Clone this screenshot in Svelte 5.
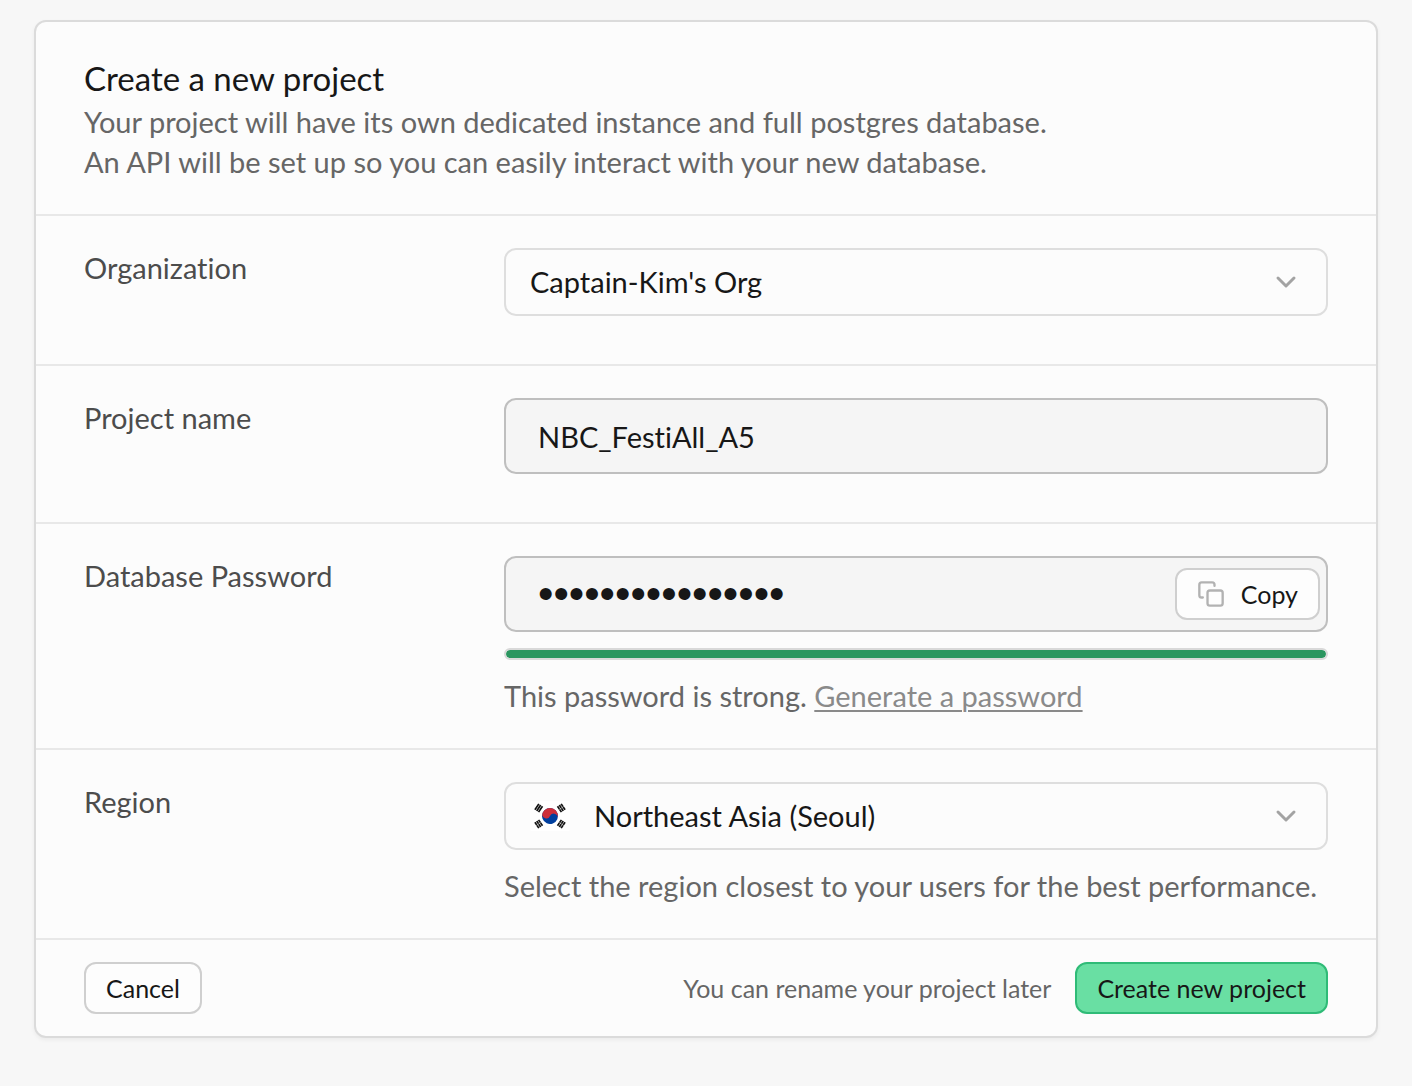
<script lang="ts">
  let organization = $state("Captain-Kim's Org");
  let projectName = $state('NBC_FestiAll_A5');
  let password = $state('aB3dE6gH9jK2mN5p');
  let region = $state('Northeast Asia (Seoul)');
  let strength = $state(100);

  const chars = 'ABCDEFGHJKLMNPQRSTUVWXYZabcdefghjkmnpqrstuvwxyz23456789';

  function generatePassword(e: MouseEvent) {
    e.preventDefault();
    const bytes = crypto.getRandomValues(new Uint8Array(16));
    password = Array.from(bytes, (b) => chars[b % chars.length]).join('');
    strength = 100;
  }

  function copyPassword() {
    navigator.clipboard?.writeText(password);
  }
</script>

{#snippet chevron()}
  <svg class="chevron" viewBox="0 0 24 24" aria-hidden="true">
    <path d="M4 8l8 8 8-8" />
  </svg>
{/snippet}

{#snippet trigram(x: number, y: number, angle: number, broken: boolean)}
  <g transform="translate({x} {y}) rotate({angle})">
    <path d="M-3.5 -2.2h7M-3.5 0h7M-3.5 2.2h7" stroke="#111" stroke-width="1.7" />
    {#if broken}
      <path d="M0 -3v6" stroke="#fff" stroke-width="0.4" />
    {/if}
  </g>
{/snippet}

<main>
  <form class="panel" onsubmit={(e) => e.preventDefault()}>
    <header>
      <h1>Create a new project</h1>
      <p>
        Your project will have its own dedicated instance and full postgres database.<br />
        An API will be set up so you can easily interact with your new database.
      </p>
    </header>

    <div class="row spaced">
      <label for="organization">Organization</label>
      <div class="field">
        <div class="select">
          <select id="organization" bind:value={organization}>
            <option>Captain-Kim's Org</option>
          </select>
          {@render chevron()}
        </div>
      </div>
    </div>

    <div class="row spaced">
      <label for="project-name">Project name</label>
      <div class="field">
        <input id="project-name" type="text" bind:value={projectName} />
      </div>
    </div>

    <div class="row">
      <label for="password">Database Password</label>
      <div class="field">
        <div class="password">
          <input id="password" type="password" autocomplete="off" bind:value={password} />
          <button type="button" class="btn copy" onclick={copyPassword}>
            <svg viewBox="0 0 24 24" aria-hidden="true">
              <rect x="9" y="9" width="13" height="13" rx="2" />
              <path d="M5 15H4a2 2 0 0 1-2-2V4a2 2 0 0 1 2-2h9a2 2 0 0 1 2 2v1" />
            </svg>
            Copy
          </button>
        </div>
        <div class="strength">
          <div class="strength-bar" style="width: {strength}%"></div>
        </div>
        <p>
          This password is strong.
          <a href="#generate" onclick={generatePassword}>Generate a password</a>
        </p>
      </div>
    </div>

    <div class="row">
      <label for="region">Region</label>
      <div class="field">
        <div class="select with-flag">
          <svg class="flag" viewBox="0 0 40 30" aria-hidden="true">
            <rect width="40" height="30" rx="2" fill="#fff" />
            <g transform="rotate(24 20 15)">
              <circle cx="20" cy="15" r="8" fill="#003f9e" />
              <path d="M12 15a8 8 0 0 1 16 0a4 4 0 0 0-8 0a4 4 0 0 1-8 0z" fill="#cd2e3a" />
            </g>
            {@render trigram(8.7, 7, -56, false)}
            {@render trigram(31.3, 7, 56, true)}
            {@render trigram(8.7, 23, 56, true)}
            {@render trigram(31.3, 23, -56, true)}
          </svg>
          <select id="region" bind:value={region}>
            <option>Northeast Asia (Seoul)</option>
          </select>
          {@render chevron()}
        </div>
        <p>Select the region closest to your users for the best performance.</p>
      </div>
    </div>

    <footer>
      <button type="button" class="btn">Cancel</button>
      <div class="actions">
        <span>You can rename your project later</span>
        <button type="submit" class="btn primary">Create new project</button>
      </div>
    </footer>
  </form>
</main>

<style>
  :global(body) {
    margin: 0;
    background: #f7f7f7;
  }
  main {
    padding: 20px 34px 48px;
    font-family: Lato, 'Liberation Sans', sans-serif;
    font-size: 29px;
    line-height: 40px;
    font-variant-ligatures: none;
    color: #171717;
  }
  .panel {
    background: #fcfcfc;
    border: 2px solid #dbdbdb;
    border-radius: 12px;
    box-shadow: 0 2px 4px rgba(0, 0, 0, 0.05);
  }
  header {
    padding: 32px 48px;
  }
  h1 {
    margin: 0;
    font-size: 33px;
    line-height: 48px;
    font-weight: 400;
  }
  p {
    margin: 0;
    color: #666;
  }
  .row {
    display: grid;
    grid-template-columns: repeat(12, 1fr);
    column-gap: 16px;
    padding: 32px 48px;
    border-top: 2px solid #e8e8e8;
  }
  .row.spaced {
    padding-bottom: 48px;
  }
  label {
    grid-column: span 4;
    color: #4c4c4c;
  }
  .field {
    grid-column: span 8;
    display: flex;
    flex-direction: column;
    gap: 16px;
    min-width: 0;
  }
  input,
  select {
    box-sizing: border-box;
    width: 100%;
    margin: 0;
    font: inherit;
    font-variant-ligatures: none;
    color: inherit;
    border-radius: 12px;
    outline: none;
  }
  input {
    height: 76px;
    padding: 0 32px;
    background: #f5f5f5;
    border: 2px solid #bfbfbf;
  }
  select {
    display: block;
    height: 68px;
    padding: 0 72px 0 24px;
    appearance: none;
    background: transparent;
    border: 2px solid #dedede;
  }
  .select,
  .password {
    position: relative;
  }
  .with-flag select {
    padding-left: 88px;
  }
  .flag {
    position: absolute;
    left: 26px;
    top: 19px;
    width: 40px;
    height: 30px;
  }
  .chevron {
    position: absolute;
    right: 30px;
    top: 22px;
    width: 24px;
    height: 24px;
    fill: none;
    stroke: #a3a3a3;
    stroke-width: 3;
    stroke-linecap: round;
    stroke-linejoin: round;
    pointer-events: none;
  }
  /* larger size so the masking dots read clearly */
  .password input {
    display: block;
    padding-right: 168px;
    font-family: 'Liberation Sans', sans-serif;
    font-size: 44px;
  }
  .btn {
    box-sizing: border-box;
    height: 52px;
    padding: 0 20px;
    font: inherit;
    font-size: 25px;
    color: #171717;
    background: #fdfdfd;
    border: 2px solid #cfcfcf;
    border-radius: 12px;
    cursor: pointer;
  }
  .btn.primary {
    background: #69dfa3;
    border-color: #2fbb77;
  }
  .copy {
    position: absolute;
    right: 8px;
    top: 12px;
    display: flex;
    align-items: center;
    gap: 16px;
  }
  .copy svg {
    width: 28px;
    height: 28px;
    fill: none;
    stroke: #b2b2b2;
    stroke-width: 2;
    stroke-linecap: round;
    stroke-linejoin: round;
  }
  .strength {
    border: 2px solid #d9d9d9;
    border-radius: 6px;
    overflow: hidden;
  }
  .strength-bar {
    height: 8px;
    background: #2b9660;
    border-radius: 4px;
  }
  a {
    color: #8a8a8a;
    text-decoration: underline;
    text-decoration-thickness: 2px;
    text-underline-offset: 3px;
  }
  footer {
    display: flex;
    align-items: center;
    justify-content: space-between;
    padding: 22px 48px;
    border-top: 2px solid #e8e8e8;
  }
  .actions {
    display: flex;
    align-items: center;
    gap: 24px;
    font-size: 25px;
    color: #666;
  }
</style>
